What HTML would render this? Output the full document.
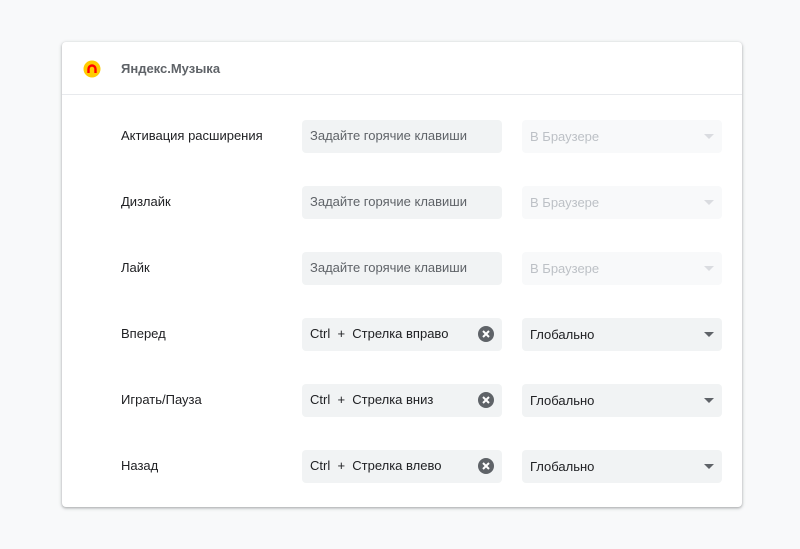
<!DOCTYPE html>
<html><head><meta charset="utf-8"><style>
body{margin:0;background:#f8f9fa;width:800px;height:549px;font-family:"Liberation Sans",sans-serif;position:relative;overflow:hidden}
.card{position:absolute;left:62px;top:42px;width:680px;height:465px;background:#fff;border-radius:4px;box-shadow:0 1px 2px rgba(60,64,67,.3),0 1px 3px 1px rgba(60,64,67,.15)}
.hdr{height:52px;border-bottom:1px solid #e8eaed;position:relative}
.hdr .t{position:absolute;left:59px;top:19px;font-size:13px;font-weight:bold;color:#5f6368}
.hdr svg{position:absolute;left:21px;top:18px}
.row{position:absolute;left:0;width:680px;height:33px}
.lbl{position:absolute;left:59px;top:8px;font-size:13px;color:#202124}
.inp{position:absolute;left:240px;top:0;width:200px;height:33px;background:#f1f3f4;border-radius:4px;font-size:13px;color:#5f6368}
.inp span{position:absolute;left:8px;top:8px}
.inp.k span{color:#202124}
.x{position:absolute;left:176px;top:8px;width:16px;height:16px;border-radius:50%;background:#5f6368}
.sel{position:absolute;left:460px;top:0;width:200px;height:33px;background:#f1f3f4;border-radius:4px;font-size:13px;color:#202124}
.sel span{position:absolute;left:8px;top:9px}
.sel i{position:absolute;left:182px;top:14px;border-left:5px solid transparent;border-right:5px solid transparent;border-top:5px solid #5f6368}
.sel.d{background:#f8f9fa;color:#bdc1c6}
.sel.d i{border-top-color:#dadce0}
</style></head><body>
<div class="card">
<div class="hdr"><svg width="18" height="18" viewBox="0 0 18 18"><circle cx="9" cy="9" r="8.5" fill="#ffcc00"/><path d="M5.5 13V9a3.5 3.5 0 0 1 7 0v4" fill="none" stroke="#f00" stroke-width="2.4"/></svg><div class="t">Яндекс.Музыка</div></div>
<div class="row" style="top:78px"><div class="lbl">Активация расширения</div><div class="inp"><span>Задайте горячие клавиши</span></div><div class="sel d"><span>В Браузере</span><i></i></div></div>
<div class="row" style="top:144px"><div class="lbl">Дизлайк</div><div class="inp"><span>Задайте горячие клавиши</span></div><div class="sel d"><span>В Браузере</span><i></i></div></div>
<div class="row" style="top:210px"><div class="lbl">Лайк</div><div class="inp"><span>Задайте горячие клавиши</span></div><div class="sel d"><span>В Браузере</span><i></i></div></div>
<div class="row" style="top:276px"><div class="lbl">Вперед</div><div class="inp k"><span>Ctrl&nbsp; +&nbsp; Стрелка вправо</span><svg class="x" viewBox="0 0 16 16"><path d="M5 5l6 6M11 5l-6 6" stroke="#fff" stroke-width="2"/></svg></div><div class="sel"><span>Глобально</span><i></i></div></div>
<div class="row" style="top:342px"><div class="lbl">Играть/Пауза</div><div class="inp k"><span>Ctrl&nbsp; +&nbsp; Стрелка вниз</span><svg class="x" viewBox="0 0 16 16"><path d="M5 5l6 6M11 5l-6 6" stroke="#fff" stroke-width="2"/></svg></div><div class="sel"><span>Глобально</span><i></i></div></div>
<div class="row" style="top:408px"><div class="lbl">Назад</div><div class="inp k"><span>Ctrl&nbsp; +&nbsp; Стрелка влево</span><svg class="x" viewBox="0 0 16 16"><path d="M5 5l6 6M11 5l-6 6" stroke="#fff" stroke-width="2"/></svg></div><div class="sel"><span>Глобально</span><i></i></div></div>
</div>
</body></html>
